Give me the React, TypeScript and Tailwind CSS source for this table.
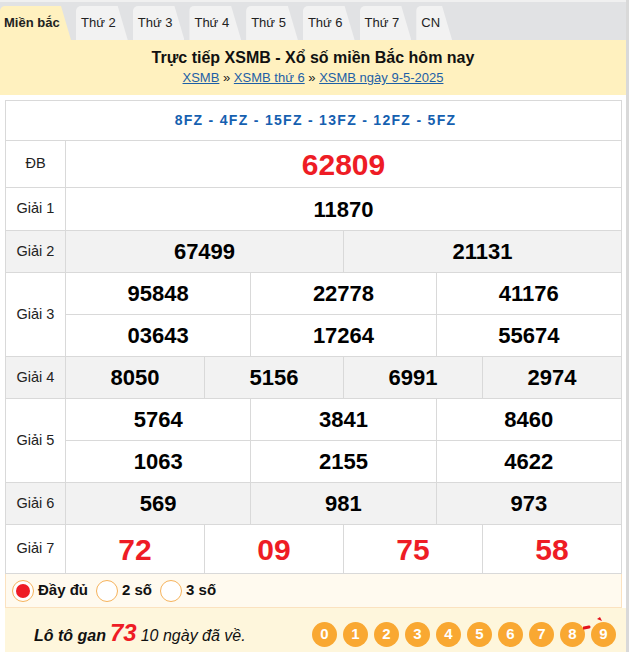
import React from "react";

const tabs = ["Thứ 2", "Thứ 3", "Thứ 4", "Thứ 5", "Thứ 6", "Thứ 7", "CN"];

const cell = "border border-[#d9d9d9] text-center";
const num = "font-bold text-[22px] text-black";
const red = "font-bold text-[30px] text-[#ee1c25]";
const label = "border border-[#d9d9d9] text-center text-[14.5px] text-[#222]";

const Radio = ({ checked, text }: { checked?: boolean; text: string }) => (
  <label className="flex items-center gap-[4px] mr-[8px]">
    <span className="w-[22px] h-[22px] rounded-full border border-[#f6b35c] bg-white flex items-center justify-center">
      {checked && <span className="w-[14px] h-[14px] rounded-full bg-[#ee1c25]" />}
    </span>
    <span className="font-bold text-[15px] text-[#111]">{text}</span>
  </label>
);

export default function App() {
  return (
    <div className="w-[629px] min-h-[652px] bg-white border-r-[3px] border-[#d9d9d9] font-['Liberation_Sans',Arial,sans-serif] overflow-hidden">
      {/* tab strip */}
      <div className="h-[40px] bg-[#e1e2e4] border-t-[2px] border-[#f0f0f0] flex items-end gap-[5px]">
        <div className="w-[71px] h-[34px] bg-[#fff1bf] rounded-tl-[5px] [clip-path:polygon(0_0,calc(100%_-_10px)_0,100%_100%,0_100%)] pl-[4px] flex items-center font-bold text-[13px] text-[#222]">
          Miền bắc
        </div>
        {tabs.map((t) => (
          <div
            key={t}
            className="h-[34px] bg-[#f2f2f2] rounded-tl-[5px] [clip-path:polygon(0_0,calc(100%_-_10px)_0,100%_100%,0_100%)] pl-[5px] pr-[12px] flex items-center text-[13px] text-[#222]"
          >
            {t}
          </div>
        ))}
      </div>

      {/* title */}
      <div className="h-[55px] bg-[#fff1bf] pt-[9px] text-center">
        <h1 className="font-bold text-[16px] leading-[18px] text-[#111]">Trực tiếp XSMB - Xổ số miền Bắc hôm nay</h1>
        <div className="text-[13px] leading-[17px] mt-[2px] text-[#222]">
          <a className="text-[#1d5fa6] underline">XSMB</a> » <a className="text-[#1d5fa6] underline">XSMB thứ 6</a> »{" "}
          <a className="text-[#1d5fa6] underline">XSMB ngày 9-5-2025</a>
        </div>
      </div>

      {/* results */}
      <table className="ml-[5px] mt-[5px] w-[617px] table-fixed border-collapse">
        <colgroup>
          <col className="w-[60px]" />
          {Array.from({ length: 12 }).map((_, i) => (
            <col key={i} />
          ))}
        </colgroup>
        <tbody>
          <tr className="h-[40px]">
            <td colSpan={13} className={`${cell} font-bold text-[14px] tracking-[1.3px] text-[#1560b0] pl-[4px]`}>
              8FZ - 4FZ - 15FZ - 13FZ - 12FZ - 5FZ
            </td>
          </tr>
          <tr className="h-[47px]">
            <td className={label}>ĐB</td>
            <td colSpan={12} className={`${cell} ${red}`}>62809</td>
          </tr>
          <tr className="h-[43px]">
            <td className={label}>Giải 1</td>
            <td colSpan={12} className={`${cell} ${num}`}>11870</td>
          </tr>
          <tr className="h-[42px] bg-[#f2f2f2]">
            <td className={label}>Giải 2</td>
            <td colSpan={6} className={`${cell} ${num}`}>67499</td>
            <td colSpan={6} className={`${cell} ${num}`}>21131</td>
          </tr>
          <tr className="h-[42px]">
            <td rowSpan={2} className={label}>Giải 3</td>
            <td colSpan={4} className={`${cell} ${num}`}>95848</td>
            <td colSpan={4} className={`${cell} ${num}`}>22778</td>
            <td colSpan={4} className={`${cell} ${num}`}>41176</td>
          </tr>
          <tr className="h-[42px]">
            <td colSpan={4} className={`${cell} ${num}`}>03643</td>
            <td colSpan={4} className={`${cell} ${num}`}>17264</td>
            <td colSpan={4} className={`${cell} ${num}`}>55674</td>
          </tr>
          <tr className="h-[42px] bg-[#f2f2f2]">
            <td className={label}>Giải 4</td>
            <td colSpan={3} className={`${cell} ${num}`}>8050</td>
            <td colSpan={3} className={`${cell} ${num}`}>5156</td>
            <td colSpan={3} className={`${cell} ${num}`}>6991</td>
            <td colSpan={3} className={`${cell} ${num}`}>2974</td>
          </tr>
          <tr className="h-[42px]">
            <td rowSpan={2} className={label}>Giải 5</td>
            <td colSpan={4} className={`${cell} ${num}`}>5764</td>
            <td colSpan={4} className={`${cell} ${num}`}>3841</td>
            <td colSpan={4} className={`${cell} ${num}`}>8460</td>
          </tr>
          <tr className="h-[42px]">
            <td colSpan={4} className={`${cell} ${num}`}>1063</td>
            <td colSpan={4} className={`${cell} ${num}`}>2155</td>
            <td colSpan={4} className={`${cell} ${num}`}>4622</td>
          </tr>
          <tr className="h-[42px] bg-[#f2f2f2]">
            <td className={label}>Giải 6</td>
            <td colSpan={4} className={`${cell} ${num}`}>569</td>
            <td colSpan={4} className={`${cell} ${num}`}>981</td>
            <td colSpan={4} className={`${cell} ${num}`}>973</td>
          </tr>
          <tr className="h-[49px]">
            <td className={label}>Giải 7</td>
            <td colSpan={3} className={`${cell} ${red}`}>72</td>
            <td colSpan={3} className={`${cell} ${red}`}>09</td>
            <td colSpan={3} className={`${cell} ${red}`}>75</td>
            <td colSpan={3} className={`${cell} ${red}`}>58</td>
          </tr>
        </tbody>
      </table>

      {/* display options */}
      <div className="ml-[5px] w-[617px] h-[34px] bg-[#fffaef] border-x border-b border-[#fbe2c0] flex items-center pl-[6px]">
        <Radio checked text="Đầy đủ" />
        <Radio text="2 số" />
        <Radio text="3 số" />
      </div>

      {/* lo gan */}
      <div className="ml-[5px] h-[50px] bg-[#fef6dc] flex items-center pl-[29px] pr-[10px]">
        <div className="italic text-[#111] flex items-baseline gap-[4px]">
          <span className="font-bold text-[16px]">Lô tô gan</span>
          <span className="font-bold text-[24px] text-[#ee1c25]">73</span>
          <span className="text-[16px]">10 ngày đã về.</span>
        </div>
        <div className="ml-auto flex gap-[6px] mt-[3px]">
          {Array.from({ length: 10 }).map((_, i) => (
            <span
              key={i}
              className="relative w-[25px] h-[25px] rounded-full bg-[#f9a832] flex items-center justify-center text-white font-bold text-[15px]"
            >
              {i === 9 && (
                <svg className="absolute left-[-8px] top-[-6px]" width="20" height="16" viewBox="0 0 20 16">
                  <path d="M1 12 L6 11" stroke="#e3121c" strokeWidth="3" strokeLinecap="round" />
                  <path d="M14 3 L17 1 L19 5 Z" fill="#e3121c" />
                </svg>
              )}
              <span className="relative">{i}</span>
            </span>
          ))}
        </div>
      </div>
    </div>
  );
}
